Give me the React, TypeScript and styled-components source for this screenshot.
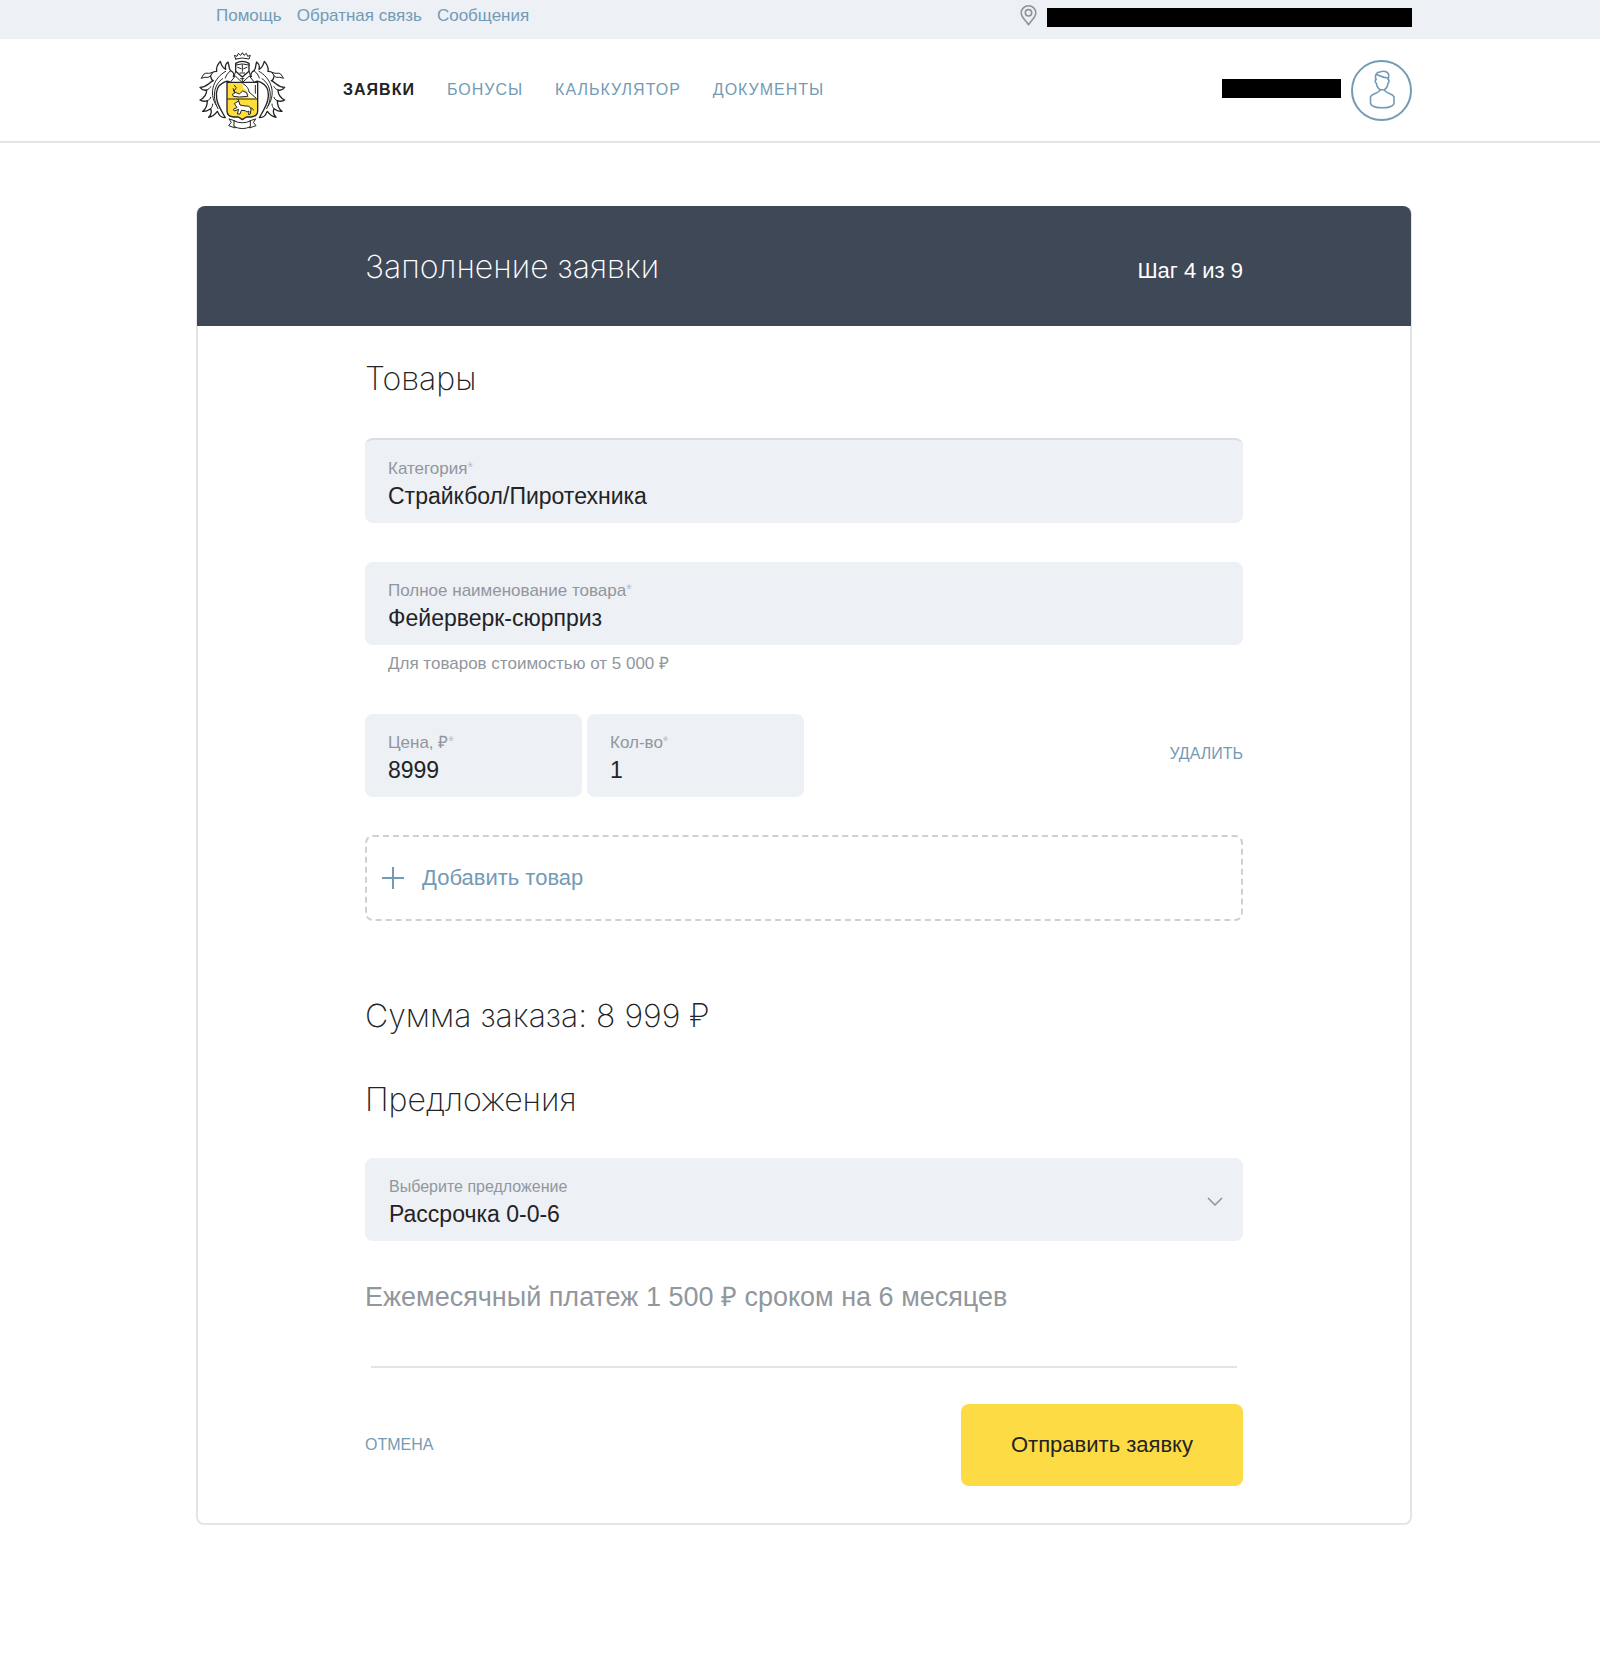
import React, { useState } from "react";
import styled, { createGlobalStyle, css } from "styled-components";

const color = {
  ink: "#222326",
  link: "#739bb5",
  muted: "#91979d",
  faint: "#b9bec6",
  panel: "#edf0f5",
  line: "#e3e4e6",
  header: "#3f4857",
  accent: "#fddb45",
};

const GlobalStyle = createGlobalStyle`
  *, *::before, *::after { box-sizing: border-box; }
  body {
    margin: 0;
    background: #fff;
    color: ${color.ink};
    font-family: "Liberation Sans", Arial, sans-serif;
    font-size: 16px;
    line-height: 22px;
  }
  h1, h2, p { margin: 0; }
  button, input, select { font: inherit; color: inherit; }
`;

const Page = styled.div`
  padding-bottom: 148px;
`;

const Container = styled.div`
  width: 100%;
  max-width: 1224px;
  margin: 0 auto;
  padding-left: 8px;
`;

const TopBar = styled.div`
  background: ${color.panel};
`;

const TopBarInner = styled(Container)`
  display: flex;
  align-items: flex-start;
  justify-content: space-between;
  height: 39px;
  padding-top: 5px;
`;

const TopLinks = styled.nav`
  display: flex;
  gap: 15px;
  padding-left: 20px;
  font-size: 17px;
`;

const TopLink = styled.a`
  color: ${color.link};
  text-decoration: none;
`;

const Location = styled.div`
  display: flex;
  align-items: flex-start;
  gap: 10px;
`;

const Redacted = styled.span<{ $width: number }>`
  width: ${(p) => p.$width}px;
  height: 19px;
  background: #000;
`;

const LocationText = styled(Redacted)`
  margin-top: 3px;
`;

const Header = styled.header`
  border-bottom: 2px solid ${color.line};
`;

const HeaderInner = styled(Container)`
  display: flex;
  align-items: center;
  height: 102px;
`;

const LogoLink = styled.a`
  display: flex;
`;

const MainNav = styled.nav`
  display: flex;
  gap: 32px;
  margin-left: 55px;
`;

const NavLink = styled.a<{ $active?: boolean }>`
  color: ${(p) => (p.$active ? color.ink : color.link)};
  font-weight: ${(p) => (p.$active ? 700 : 400)};
  letter-spacing: 1px;
  text-decoration: none;
  text-transform: uppercase;
`;

const Account = styled.div`
  display: flex;
  align-items: center;
  gap: 10px;
  margin-left: auto;
`;

const AccountName = styled(Redacted)`
  margin-bottom: 4px;
`;

const AvatarButton = styled.button`
  display: flex;
  align-items: center;
  justify-content: center;
  width: 61px;
  height: 61px;
  padding: 0;
  border: 2px solid ${color.link};
  border-radius: 50%;
  background: none;
  color: ${color.link};
`;

const Card = styled.form`
  margin-top: 63px;
  border: 2px solid ${color.line};
  border-top: 0;
  border-radius: 8px;
`;

const CardHeader = styled.div`
  display: flex;
  align-items: baseline;
  justify-content: space-between;
  margin: 0 -1px;
  padding: 39px 168px 37px;
  border-radius: 8px 8px 0 0;
  background: ${color.header};
  color: #fff;
`;

const headingText = css`
  font-family: Inter, "Noto Sans", sans-serif;
  font-size: 32px;
  font-weight: 250;
  line-height: 44px;
`;

const Title = styled.h1`
  ${headingText}
`;

const Heading = styled.h2`
  ${headingText}
`;

const Step = styled.span`
  font-size: 22px;
  line-height: 28px;
`;

const CardBody = styled.div`
  padding: 31px 167px 37px;
`;

const Section = styled.section`
  display: flex;
  flex-direction: column;
`;

const Total = styled(Heading)`
  margin-top: 73px;
`;

const OfferHeading = styled(Heading)`
  margin-top: 40px;
`;

const FieldBox = styled.div<{ $ruled?: boolean }>`
  display: flex;
  flex-direction: column;
  gap: 2px;
  padding: 18px 23px 13px;
  border-radius: 8px;
  border-top: ${(p) => (p.$ruled ? `2px solid #d9dce1` : "0")};
  background: ${color.panel};
`;

const Label = styled.label<{ $small?: boolean }>`
  color: ${color.muted};
  font-size: ${(p) => (p.$small ? 16 : 17)}px;
`;

const Star = styled.sup`
  color: ${color.faint};
  font-size: 14px;
  line-height: 0;
  vertical-align: 2px;
`;

const valueText = css`
  width: 100%;
  height: 28px;
  padding: 0;
  border: 0;
  outline: 0;
  background: none;
  color: ${color.ink};
  font-size: 23px;
  line-height: 28px;
`;

const TextInput = styled.input`
  ${valueText}
`;

const SelectInput = styled.select`
  ${valueText}
  appearance: none;
`;

const Stack = styled.div`
  display: flex;
  flex-direction: column;
  margin-top: 37px;
`;

const ProductName = styled.div`
  margin-top: 39px;
`;

const Hint = styled.p`
  padding: 8px 23px 0;
  color: ${color.muted};
  font-size: 17px;
`;

const PriceRow = styled.div`
  display: flex;
  align-items: center;
  gap: 5px;
  margin-top: 39px;
`;

const SmallField = styled(FieldBox)`
  width: 217px;
`;

const TextButton = styled.button`
  padding: 0;
  border: 0;
  background: none;
  color: ${color.link};
  text-transform: uppercase;
`;

const RemoveButton = styled(TextButton)`
  margin: 0 0 4px auto;
`;

const AddButton = styled.button`
  display: flex;
  align-items: center;
  gap: 18px;
  height: 86px;
  margin-top: 38px;
  padding: 0 15px;
  border: 2px dashed #d0d0d0;
  border-radius: 8px;
  background: none;
  color: ${color.link};
  font-size: 22px;
  line-height: 28px;
`;

const SelectBox = styled.div`
  display: flex;
  align-items: center;
  margin-top: 36px;
  padding: 18px 20px 13px 24px;
  border-radius: 8px;
  background: ${color.panel};
`;

const SelectField = styled.div`
  display: flex;
  flex: 1;
  flex-direction: column;
  gap: 2px;
`;

const Payment = styled.p`
  margin-top: 39px;
  color: ${color.muted};
  font-size: 27px;
  line-height: 34px;
`;

const Divider = styled.hr`
  width: auto;
  height: 2px;
  margin: 52px 6px 36px;
  border: 0;
  background: ${color.line};
`;

const Actions = styled.div`
  display: flex;
  align-items: center;
  justify-content: space-between;
`;

const SubmitButton = styled.button`
  width: 282px;
  height: 82px;
  border: 0;
  border-radius: 8px;
  background: ${color.accent};
  font-size: 22px;
  line-height: 28px;
`;

const CrestHalf = () => (
  <g>
    <path
      fill="#fff"
      strokeWidth="4"
      d="M160 110C164 102 158 95 152 92C146 88 148 76 144 66C136 72 135 80 137 88C126 84 124 74 121 64C112 74 108 84 110 94C98 94 90 100 92 110C94 118 98 122 100 122C86 128 82 142 60 142C66 150 72 152 80 150C80 164 72 174 60 180C68 186 76 184 82 182C82 196 78 206 68 214C78 216 86 210 92 206C96 216 92 226 86 232C98 230 106 222 112 214C118 222 116 232 136 233C130 222 112 196 110 176C106 152 114 136 130 128C140 122 148 122 150 130"
    />
    <path fill="none" d="M137 94C104 112 82 156 110 198M128 116C100 134 96 174 114 206M80 150C86 148 90 144 92 140M82 182C88 180 92 176 92 172M92 206C96 202 98 198 98 192M152 92C144 98 138 106 136 114" />
    <path fill="#fff" d="M64 114L72 102Q76 98 86 100L98 98L90 109Q86 114 76 112Z" />
    <path fill="#fff" d="M150 128L166 108L187 128V132H148Z" />
    <path fill="#fff" d="M148 237L166 243V264L146 257L153 248Z" />
  </g>
);

const Logo = () => (
  <svg width="92" height="84" viewBox="48 24 276 252" fill="none" stroke="#242424" strokeWidth="3" strokeLinejoin="round" strokeLinecap="round" role="img" aria-label="Герб">
    <CrestHalf />
    <g transform="translate(374 0) scale(-1 1)">
      <CrestHalf />
    </g>
    <path fill="#fff" d="M167 57L163 46L171 49L175 40L182 46L187 38L192 46L199 40L203 49L211 46L207 57Q187 51 167 57Z" />
    <path fill="#fff" strokeWidth="4" d="M167 70Q187 58 207 70V94L187 111L167 94Z" />
    <path d="M167 75Q187 68 207 75M187 74V94M173 82L183 86M201 82L191 86M180 99H194M187 116V126M182 116H192M167 94L162 110M207 94L212 110" />
    <path fill="#ffde3b" strokeWidth="4" d="M141 127H233V212Q233 229 213 231H199L187 239L175 231H161Q141 229 141 212Z" />
    <path fill="#fff" stroke="none" d="M186 129H231V175H206Q208 154 190 144Z" />
    <path d="M143 177H231M188 130Q207 142 207 156L228 174M226 136V160" />
    <path fill="#fff" d="M160 147L164 156L178 162L188 153L200 158L203 169L178 171L160 169L157 163L163 160Z" />
    <path d="M163 136L169 143L163 152" />
    <path fill="#fff" d="M164 190L176 183L180 195L195 198Q209 196 213 207L211 222L206 224L207 213L201 216L196 212L184 211L180 222H172L176 208L163 213L160 208L170 203Z" />
    <path d="M213 203L221 210M176 183L174 178" />
    <path fill="#fff" d="M163 243Q187 254 211 243V260Q187 272 163 260Z" />
  </svg>
);

const PinIcon = () => (
  <svg width="17" height="21" viewBox="0 0 17 21" fill="none" stroke="#8d939a" strokeWidth="1.6" strokeLinejoin="round">
    <path d="M8.500 19.700C6 16 1.200 11.900 1.200 7.900a7.300 7.100 0 0 1 14.600 0c0 4-4.800 8.100-7.300 11.800Z" />
    <circle cx="8.500" cy="7.800" r="3.200" />
  </svg>
);

const UserIcon = () => (
  <svg width="28" height="40" viewBox="0 0 28 40" fill="none" stroke="currentColor" strokeWidth="1.600" strokeLinejoin="round" strokeLinecap="round">
    <path d="M8 9.500C6.500 5 8.500 2 12 2c3-1.600 8.500-.7 8.800 3.500L20.200 9.500M8.500 4.500C12 5.500 14 8 20.500 8" />
    <path d="M8 9.500c-1.300.7-1 2.800.3 3.700.5 3.400 2.200 5.700 4 6.600h4c1.800-.9 3.300-3.200 3.700-6.600 1.300-.9 1.500-3 .2-3.700" />
    <path d="M12 19.800c0 3.200-7.500 3.200-9.500 6.800v7C5 39.200 23.500 39.200 26 33.600v-7c-2-3.600-9.500-3.600-9.500-6.800" />
  </svg>
);

const PlusIcon = () => (
  <svg width="22" height="22" viewBox="0 0 22 22" fill="none" stroke="currentColor" strokeWidth="2">
    <path d="M11 0V22M0 11H22" />
  </svg>
);

const ChevronIcon = () => (
  <svg width="16" height="10" viewBox="0 0 16 10" fill="none" stroke="#8d939a" strokeWidth="1.500">
    <path d="M1 1L8 8L15 1" />
  </svg>
);

type FieldProps = {
  id: string;
  label: string;
  value: string;
  onChange: (value: string) => void;
  ruled?: boolean;
  small?: boolean;
};

const Field = ({ id, label, value, onChange, ruled, small }: FieldProps) => {
  const Box = small ? SmallField : FieldBox;
  return (
    <Box $ruled={ruled}>
      <Label htmlFor={id}>
        {label}
        <Star>*</Star>
      </Label>
      <TextInput id={id} value={value} onChange={(e) => onChange(e.target.value)} />
    </Box>
  );
};

const topLinks = ["Помощь", "Обратная связь", "Сообщения"];
const navLinks = ["Заявки", "Бонусы", "Калькулятор", "Документы"];

export default function App() {
  const [category, setCategory] = useState("Страйкбол/Пиротехника");
  const [name, setName] = useState("Фейерверк-сюрприз");
  const [price, setPrice] = useState("8999");
  const [count, setCount] = useState("1");

  return (
    <Page>
      <GlobalStyle />
      <TopBar>
        <TopBarInner>
          <TopLinks>
            {topLinks.map((text) => (
              <TopLink key={text} href="#">
                {text}
              </TopLink>
            ))}
          </TopLinks>
          <Location>
            <PinIcon />
            <LocationText $width={365} />
          </Location>
        </TopBarInner>
      </TopBar>
      <Header>
        <HeaderInner>
          <LogoLink href="#">
            <Logo />
          </LogoLink>
          <MainNav>
            {navLinks.map((text, i) => (
              <NavLink key={text} href="#" $active={i === 0}>
                {text}
              </NavLink>
            ))}
          </MainNav>
          <Account>
            <AccountName $width={119} />
            <AvatarButton type="button" aria-label="Профиль">
              <UserIcon />
            </AvatarButton>
          </Account>
        </HeaderInner>
      </Header>
      <Container as="main">
        <Card onSubmit={(e) => e.preventDefault()}>
          <CardHeader>
            <Title>Заполнение заявки</Title>
            <Step>Шаг 4 из 9</Step>
          </CardHeader>
          <CardBody>
            <Section>
              <Heading>Товары</Heading>
              <Stack>
                <Field id="category" label="Категория" value={category} onChange={setCategory} ruled />
                <ProductName>
                  <Field id="name" label="Полное наименование товара" value={name} onChange={setName} />
                  <Hint>Для товаров стоимостью от 5 000 ₽</Hint>
                </ProductName>
                <PriceRow>
                  <Field id="price" label="Цена, ₽" value={price} onChange={setPrice} small />
                  <Field id="count" label="Кол-во" value={count} onChange={setCount} small />
                  <RemoveButton type="button">Удалить</RemoveButton>
                </PriceRow>
                <AddButton type="button">
                  <PlusIcon />
                  Добавить товар
                </AddButton>
              </Stack>
            </Section>
            <Section>
              <Total>Сумма заказа: 8 999 ₽</Total>
              <OfferHeading>Предложения</OfferHeading>
              <SelectBox>
                <SelectField>
                  <Label htmlFor="offer" $small>
                    Выберите предложение
                  </Label>
                  <SelectInput id="offer">
                    <option>Рассрочка 0-0-6</option>
                  </SelectInput>
                </SelectField>
                <ChevronIcon />
              </SelectBox>
              <Payment>Ежемесячный платеж 1 500 ₽ сроком на 6 месяцев</Payment>
            </Section>
            <Divider />
            <Actions>
              <TextButton type="button">Отмена</TextButton>
              <SubmitButton type="submit">Отправить заявку</SubmitButton>
            </Actions>
          </CardBody>
        </Card>
      </Container>
    </Page>
  );
}
